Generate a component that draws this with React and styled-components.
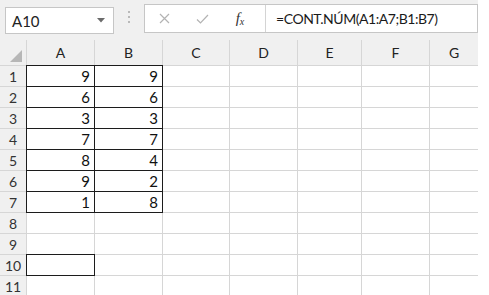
import React from "react";
import styled, { createGlobalStyle } from "styled-components";

const GlobalStyle = createGlobalStyle`
  *, *::before, *::after { box-sizing: border-box; }
  html, body { margin: 0; padding: 0; background: #fff; }
  body { font-family: Lato, "Liberation Sans", sans-serif; }
`;

const Sheet = styled.div`
  width: 478px;
  height: 295px;
  overflow: hidden;
  background: #f0f0f0;
  display: flex;
  flex-direction: column;
`;

const Toolbar = styled.div`
  height: 40px;
  flex-shrink: 0;
  display: flex;
  align-items: flex-start;
  padding-left: 5px;
`;

const NameBox = styled.div`
  margin-top: 7px;
  width: 109px;
  height: 27px;
  background: #fff;
  border: 1px solid #c6c6c6;
  display: flex;
  align-items: center;
  justify-content: space-between;
  padding: 0 8px 0 6px;
  font-size: 15px;
  color: #222;
`;

const Grip = styled.div`
  width: 30px;
  height: 34px;
  display: flex;
  flex-direction: column;
  align-items: center;
  justify-content: center;
  gap: 3px;
  span {
    width: 2px;
    height: 2px;
    background: #b9b9b9;
  }
`;

const FormulaBar = styled.div`
  margin-top: 4px;
  flex: 1;
  height: 29px;
  background: #fff;
  border: 1px solid #c6c6c6;
  display: flex;
`;

const Tools = styled.div`
  width: 121px;
  display: flex;
  align-items: center;
  border-right: 1px solid #d4d4d4;
`;

const ToolSlot = styled.div`
  width: 38px;
  display: flex;
  justify-content: center;
  align-items: center;
  color: #444;
`;

const Fx = styled.span`
  font-family: "Liberation Serif", serif;
  font-style: italic;
  font-size: 15px;
  color: #333;
  sub { font-size: 10px; vertical-align: -2px; }
`;

const Formula = styled.div`
  flex: 1;
  display: flex;
  align-items: center;
  padding-left: 10px;
  font-size: 14px;
  letter-spacing: -0.45px;
  color: #1a1a1a;
  white-space: nowrap;
`;

const Grid = styled.div`
  display: grid;
  grid-template-columns: 26px 67px 67px 66px 67px 63px 67px 48px;
  grid-template-rows: 25px repeat(11, 20px);
  gap: 1px;
  background: #d6d6d6;
`;

const Corner = styled.div`
  background: #f0f0f0;
  display: flex;
  align-items: flex-end;
  justify-content: flex-end;
  padding: 0 4px 3px 0;
`;

const ColHead = styled.div`
  background: #f0f0f0;
  display: flex;
  align-items: center;
  justify-content: center;
  font-size: 14px;
  color: #222;
`;

const RowHead = styled.div`
  background: #f0f0f0;
  display: flex;
  align-items: center;
  justify-content: center;
  font-size: 14px;
  color: #333;
`;

const Cell = styled.div`
  background: #fff;
  display: flex;
  align-items: center;
  justify-content: flex-end;
  padding-right: 4px;
  font-size: 15px;
  color: #111;
  box-shadow: ${(p) => (p.$framed ? "0 0 0 1px #1c1c1c" : "none")};
`;

const cols = ["A", "B", "C", "D", "E", "F", "G"];
const colA = [9, 6, 3, 7, 8, 9, 1];
const colB = [9, 6, 3, 7, 4, 2, 8];

export default function App() {
  const rows = Array.from({ length: 11 }, (_, i) => i + 1);
  return (
    <>
      <GlobalStyle />
      <Sheet>
        <Toolbar>
          <NameBox>
            <span>A10</span>
            <svg width="8" height="5" viewBox="0 0 8 5">
              <polygon points="0,0 8,0 4,4.5" fill="#6b6b6b" />
            </svg>
          </NameBox>
          <Grip>
            <span />
            <span />
            <span />
          </Grip>
          <FormulaBar>
            <Tools>
              <ToolSlot>
                <svg width="11" height="11" viewBox="0 0 11 11">
                  <path d="M1 1 L10 10 M10 1 L1 10" stroke="#b3b3b3" strokeWidth="1.2" />
                </svg>
              </ToolSlot>
              <ToolSlot>
                <svg width="13" height="10" viewBox="0 0 13 10">
                  <path d="M1 5.5 L4.5 9 L12 1" stroke="#b3b3b3" strokeWidth="1.2" fill="none" />
                </svg>
              </ToolSlot>
              <ToolSlot>
                <Fx>
                  f<sub>x</sub>
                </Fx>
              </ToolSlot>
            </Tools>
            <Formula>=CONT.NÚM(A1:A7;B1:B7)</Formula>
          </FormulaBar>
        </Toolbar>
        <Grid>
          <Corner>
            <svg width="12" height="12" viewBox="0 0 12 12">
              <polygon points="12,0 12,12 0,12" fill="#b7b7b7" />
            </svg>
          </Corner>
          {cols.map((c) => (
            <ColHead key={c}>{c}</ColHead>
          ))}
          {rows.map((r) => (
            <React.Fragment key={r}>
              <RowHead>{r}</RowHead>
              {cols.map((c) => {
                let val = "";
                if (c === "A" && r <= 7) val = colA[r - 1];
                if (c === "B" && r <= 7) val = colB[r - 1];
                const framed = ((c === "A" || c === "B") && r <= 7) || (c === "A" && r === 10);
                return (
                  <Cell key={c} $framed={framed}>
                    {val}
                  </Cell>
                );
              })}
            </React.Fragment>
          ))}
        </Grid>
      </Sheet>
    </>
  );
}
